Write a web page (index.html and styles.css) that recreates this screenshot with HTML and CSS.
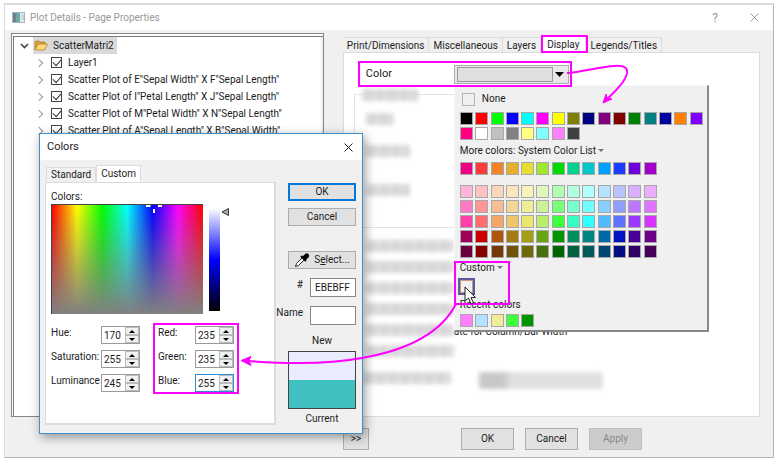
FILE: index.html
```html
<!DOCTYPE html>
<html lang="en">
<head>
<meta charset="utf-8">
<title>Plot Details - Page Properties</title>
<link rel="stylesheet" href="styles.css">
</head>
<body>
<main class="window">
  <header class="titlebar">
    <svg class="app-icon" width="13" height="11" viewBox="0 0 13 11"><rect x=".5" y=".5" width="12" height="10" fill="#e8ecef" stroke="#aab2b8"/><rect x="1" y="1" width="7" height="9" fill="#6fa8a2"/><rect x="1" y="1" width="3" height="9" fill="#6a8494"/><path d="M9 3h3M9 5h3M9 7h3" stroke="#a8c4cc"/></svg>
    <h1>Plot Details - Page Properties</h1>
    <button class="plain help" aria-label="Help">?</button>
    <button class="plain" aria-label="Close"><svg width="9" height="9" viewBox="0 0 9 9"><path d="M.5.5l8 8M8.500.5l-8 8" stroke="#999" fill="none"/></svg></button>
  </header>

  <div class="content">
    <ul class="tree">
      <li class="root"><svg width="9" height="6" viewBox="0 0 9 6"><path d="M1 1l3.500 3.500L8 1" fill="none" stroke="#444" stroke-width="1.600"/></svg><span class="node"><svg width="14" height="11" viewBox="0 0 14 11"><path d="M1 10V2l1-1h3l1 1h5v2" fill="#d9a43c" stroke="#a87a20" stroke-width=".7"/><path d="M1 10l3-6h9.500l-3 6z" fill="#fbd877" stroke="#a87a20" stroke-width=".7"/></svg>ScatterMatri2</span></li>
      <li><i class="chev"></i><input type="checkbox" id="t1" checked><label for="t1">Layer1</label></li>
      <li><i class="chev"></i><input type="checkbox" id="t2" checked><label for="t2">Scatter Plot of E"Sepal Width" X F"Sepal Length"</label></li>
      <li><i class="chev"></i><input type="checkbox" id="t3" checked><label for="t3">Scatter Plot of I"Petal Length" X J"Sepal Length"</label></li>
      <li><i class="chev"></i><input type="checkbox" id="t4" checked><label for="t4">Scatter Plot of M"Petal Width" X N"Sepal Length"</label></li>
      <li><i class="chev"></i><input type="checkbox" id="t5" checked><label for="t5">Scatter Plot of A"Sepal Length" X B"Sepal Width"</label></li>
    </ul>

    <section class="details">
      <nav class="tabs">
        <button>Print/Dimensions</button><button>Miscellaneous</button><button>Layers</button><button class="active">Display</button><button>Legends/Titles</button>
      </nav>
      <div class="page">
        <div class="color-row">
          <label for="color">Color</label>
          <div class="picker">
            <button id="color" class="color-button" aria-haspopup="true"><span class="fill"></span><svg width="9" height="5" viewBox="0 0 9 5"><path d="M0 0h9L4.500 5z"/></svg></button>
            <div class="popup">
              <label class="none"><input type="checkbox">None</label>
              <div class="swatches" id="basic"></div>
              <button class="heading">More colors: System Color List<i></i></button>
              <div class="swatches narrow" id="system"></div>
              <div class="swatches narrow shades" id="shades"></div>
              <button class="heading custom-heading">Custom<i></i></button>
              <button class="custom-swatch" aria-label="Custom color"></button>
              <div class="recent">Recent colors</div>
              <div class="swatches" id="recent"></div>
            </div>
          </div>
        </div>
        <div class="group first">
          <i class="smudge legend"></i>
          <i class="smudge s"></i><i class="smudge m"></i><i class="smudge m last"></i>
        </div>
        <div class="group second">
          <i class="smudge l"></i><i class="smudge l"></i><i class="smudge l"></i><i class="smudge l"></i>
          <div class="option"><i class="smudge l"></i><span>ate for Column/Bar Width</span></div>
          <i class="smudge l"></i>
        </div>
        <div class="bottom-row"><i class="smudge l"></i><i class="smudge combo"></i></div>
      </div>
    </section>
  </div>

  <footer class="actions">
    <button class="btn more">&gt;&gt;</button>
    <button class="btn">OK</button><button class="btn">Cancel</button><button class="btn" disabled>Apply</button>
  </footer>

  <section class="dialog" role="dialog" aria-labelledby="dlg-title">
    <header class="dialog-title">
      <h2 id="dlg-title">Colors</h2>
      <button class="plain" aria-label="Close"><svg width="9" height="9" viewBox="0 0 9 9"><path d="M.5.5l8 8M8.500.5l-8 8" stroke="#222" fill="none"/></svg></button>
    </header>
    <div class="dialog-body">
      <div class="dialog-main">
        <nav class="dialog-tabs"><button>Standard</button><button class="active">Custom</button></nav>
        <div class="dialog-page">
          <div class="caption">Colors:</div>
          <div class="spectrum-row">
            <div class="spectrum"><svg width="16" height="10" viewBox="0 0 16 10"><path d="M0 1h4.500M12 1h4M8 4v4" stroke="#fff" stroke-width="2"/></svg></div>
            <div class="lum"></div>
            <svg class="pointer" width="9" height="8" viewBox="0 0 9 8"><path d="M1 4l6.500-3.500v7z" fill="#aaa" stroke="#333"/></svg>
          </div>
          <div class="values">
            <label for="hue">Hue:</label><div class="spin"><input id="hue" value="170"><button aria-label="Up"></button><button class="down" aria-label="Down"></button></div>
            <label for="red">Red:</label><div class="spin"><input id="red" value="235"><button aria-label="Up"></button><button class="down" aria-label="Down"></button></div>
            <label for="sat">Saturation:</label><div class="spin"><input id="sat" value="255"><button aria-label="Up"></button><button class="down" aria-label="Down"></button></div>
            <label for="green">Green:</label><div class="spin"><input id="green" value="235"><button aria-label="Up"></button><button class="down" aria-label="Down"></button></div>
            <label for="lumi">Luminance</label><div class="spin"><input id="lumi" value="245"><button aria-label="Up"></button><button class="down" aria-label="Down"></button></div>
            <label for="blue">Blue:</label><div class="spin focus"><input id="blue" value="255"><button aria-label="Up"></button><button class="down" aria-label="Down"></button></div>
          </div>
        </div>
      </div>
      <div class="side">
        <button class="btn primary">OK</button>
        <button class="btn">Cancel</button>
        <button class="btn select"><svg width="16" height="16" viewBox="0 0 16 16"><path d="M1.500 14.500l1-3L9 5l2 2-6.500 6.500z" fill="#fff" stroke="#222"/><path d="M7 4l5 5M9 5.500L12 2.500a1.500 1.500 0 0 1 2 2L11 7.500z" fill="#000" stroke="#000" stroke-width="2"/></svg><span>S<u>e</u>lect...</span></button>
        <div class="field"><label for="hex">#</label><input id="hex" value="EBEBFF"></div>
        <div class="field"><label for="name">Name</label><input id="name"></div>
        <div class="state">New</div>
        <div class="compare"></div>
        <div class="state">Current</div>
      </div>
    </div>
  </section>

  <svg class="notes" width="778" height="461" viewBox="0 0 778 461">
    <g fill="none" stroke="#f0f" stroke-width="2">
      <rect x="359" y="62" width="212" height="24"/>
      <rect x="542" y="36" width="45" height="16"/>
      <rect x="455" y="262" width="54" height="42"/>
      <rect x="154" y="324" width="84" height="69"/>
      <path d="M567 73C590 71 624 60 627 70C629 78 617 90 606 100"/>
      <path d="M456 304C440 335 402 351 362 358C330 364 290 364 248 361"/>
    </g>
    <path d="M603 103l3-9 1 4 5 1z" fill="#f0f" stroke="#f0f"/>
    <path d="M241 360.500l10-4-2 4 2 5z" fill="#f0f" stroke="#f0f"/>
    <path d="M465 287v14l3.500-3 2.500 6 2.500-1-2.500-5.500h4.500z" fill="#fff" stroke="#222"/>
  </svg>
</main>
<script src="swatches.js"></script>
</body>
</html>
```
FILE: swatches.js
```js
const palettes = {
  basic: "#000 #f00 #0f0 #00f #0ff #f0f #ff0 #808000 #000080 #800080 #800000 #008000 #008080 #0000a0 #ff8000 #8000ff #ff0080 #fff #c0c0c0 #808080 #ffff80 #80ffff #ff80ff #404040",
  system: "#f00082 #fa3c3c #f08228 #e6af2d #e6dc32 #a0e632 #00dc00 #00d28c #00c8c8 #00a0ff #1e3cff #6e00dc #a000c8",
  shades: "#ffb4dc #ffc1c1 #fad7b9 #fae6c0 #f7f3bd #dff7bd #b0ffb0 #b0ffe0 #b0ffff #b5e3ff #bbc3ff #d8b0ff #edadff " +
    "#ff7ac3 #fd9797 #f8be91 #f3d798 #f1ec96 #cdf197 #78ff78 #78ffd0 #70ffff #85d0ff #919dff #bb78ff #df73ff " +
    "#ff40aa #ff6e6e #f5a567 #eec569 #eee66a #b9ee6a #3cff3c #35ffc0 #30ffff #50baff #6073ff #9d38ff #d935ff " +
    "#a0005a #cc0000 #b0560c #a57a12 #a59e12 #69a512 #009400 #008f5f #008585 #006aa8 #0014c4 #4a0095 #6c0087 " +
    "#6c003c #880000 #75380a #70520c #6e6a0c #46700e #006400 #006040 #005a5a #004873 #000e82 #310064 #470059",
  recent: "#ff80ff #b5e3ff #f1ec96 #3cff3c #009400"
};
for (const [id, colors] of Object.entries(palettes)) {
  const box = document.getElementById(id);
  for (const c of colors.split(" ")) {
    const b = document.createElement("button");
    b.style.background = c;
    b.setAttribute("aria-label", c);
    box.append(b);
  }
}
```
FILE: styles.css
```css
* { box-sizing: border-box; }
body { margin: 0; background: #fff; font: 10px/14px Roboto, "Open Sans", sans-serif; color: #1c1c1c; }
button, input { font: inherit; color: inherit; margin: 0; padding: 0; border-radius: 0; }
h1, h2 { margin: 0; font-size: inherit; font-weight: 400; }

.window { position: relative; display: flex; flex-direction: column; margin: 3px 4px; min-height: calc(100vh - 6px); border: 1px solid #b4b4b4; border-top: 2px solid #dcdcdc; border-left-color: #dcdcdc; background: #f0f0f0; }
.titlebar { display: flex; align-items: center; height: 25px; padding: 0 14px 0 7px; background: #fff; color: #999; }
.titlebar h1 { flex: 1; margin-left: 5px; }
.plain { border: 0; background: none; line-height: 0; }
.help { margin-right: 32px; font-size: 12px; line-height: 14px; }

.content { flex: 1; display: grid; grid-template-columns: 3fr 4fr; gap: 19px; padding: 3px 13px 0 6px; }
.tree { margin: 0; padding: 3px 0 0 4px; list-style: none; background: #fff; border: 1px solid #828790; box-shadow: inset 1px 2px 0 #fff, inset 2px 3px 0 #777, inset -2px 0 0 #f0f0f0; overflow: hidden; white-space: nowrap; }
.tree li { display: flex; align-items: center; height: 17px; padding-left: 20px; }
.tree .root { padding-left: 4px; }
.node { display: flex; align-items: center; gap: 5px; margin-left: 4px; padding: 0 3px 0 1px; height: 17px; background: #d9d9d9; }
.chev { width: 6px; height: 6px; margin-right: 9px; border: solid #999; border-width: 1px 1px 0 0; transform: rotate(45deg); }
.tree input { appearance: none; width: 11px; height: 11px; margin-right: 6px; border: 1px solid #444; background: #fff; position: relative; }
.tree input::after { content: ""; position: absolute; left: 1px; top: 1px; width: 7px; height: 4px; border: solid #333; border-width: 0 0 1px 1px; transform: rotate(-48deg); }

.details { display: flex; flex-direction: column; min-width: 0; }
.tabs { display: flex; align-items: flex-end; height: 19px; margin-right: 100px; }
.tabs button { height: 15px; padding: 0 4px; border: 1px solid #dcdcdc; border-width: 1px 1px 0 0; background: #f0f0f0; line-height: 13px; white-space: nowrap; }
.tabs .active { height: 17px; padding: 0 6px; background: #fff; }
.page { flex: 1; background: #fff; border: 1px solid #dcdcdc; padding: 10px; }
.color-row { display: flex; align-items: center; height: 22px; margin-bottom: 9px; padding-left: 12px; }
.color-row > label { width: 88px; font-size: 11px; }
.picker { position: relative; }
.color-button { display: flex; align-items: center; gap: 2px; width: 115px; height: 19px; padding: 1px 4px 1px 2px; border: 1px solid #adadad; background: #e8e8e8; }
.fill { flex: 1; height: 15px; border: 1px solid #999; background: #dfdfdf; }
.popup { position: absolute; z-index: 2; left: 0; top: 20px; padding: 6px 4px 3px 5px; border: 1px solid #f8f8f8; border-right: 2px solid #888; border-bottom: 2px solid #888; background: #f0f0f0; }
.none { display: flex; align-items: center; gap: 7px; height: 15px; margin: 0 0 5px 2px; }
.none input { appearance: none; width: 13px; height: 13px; margin: 0; border: 1px solid #b4b4b4; }
.swatches { display: grid; grid-template-columns: repeat(16, 13px); justify-content: space-between; row-gap: 2px; width: 243px; }
.narrow { grid-template-columns: repeat(13, 13px); width: 197px; }
.swatches button { height: 13px; border: 1px solid #a8a8a8; }
.heading { display: flex; align-items: center; gap: 2px; height: 22px; border: 0; background: none; }
.heading i { border: 3px solid transparent; border-top-color: #777; border-bottom: 0; }
.shades { margin-top: 10px; }
.custom-heading { height: 20px; }
.custom-swatch { display: block; width: 17px; height: 17px; margin-left: -2px; border: 2px solid #5a5a9c; background: #f0f0f0; box-shadow: inset 0 0 0 1px #c49a80; }
.recent { height: 19px; padding-top: 3px; }

.group { margin-right: 60px; border: 1px solid #e4e4e4; }
.first { height: 134px; padding-left: 11px; }
.second { height: 136px; padding: 11px 0 0 11px; border-color: #fff; }
.smudge { display: block; height: 12px; border-radius: 2px; background: repeating-linear-gradient(90deg, #dcdadc 0 4px, #d6d4d6 4px 9px, #e0dee0 9px 12px); filter: blur(2px); }
.legend { width: 56px; margin: -6px 0 12px -4px; }
.s { width: 28px; margin-bottom: 20px; }
.m { width: 44px; margin-bottom: 27px; }
.last { margin: 0; }
.l { width: 88px; margin-bottom: 9px; }
.option { display: flex; align-items: flex-start; height: 21px; }
.option span { line-height: 16px; }
.bottom-row { display: flex; gap: 28px; margin: 8px 0 0 9px; }
.combo { width: 124px; height: 17px; background: linear-gradient(90deg, #c8c8c8 0 24px, #e0e0e0 32px); }

.actions { display: flex; align-items: center; gap: 11px; height: 40px; padding: 3px 131px 0 338px; }
.btn { height: 22px; width: 53px; border: 1px solid #adadad; background: #e1e1e1; }
.more { width: 26px; margin-right: auto; }
.btn:disabled { background: #ccc; color: #8a8a8a; border-color: #bfbfbf; }

.dialog { position: absolute; z-index: 3; left: 34px; top: 128px; width: 324px; border: 1px solid #3e91cc; background: #f0f0f0; box-shadow: 2px 3px 10px rgba(0,0,0,.4); }
.dialog-title { display: flex; align-items: center; justify-content: space-between; height: 26px; padding: 0 9px 0 7px; background: #fff; font-size: 11px; }
.dialog-body { display: flex; gap: 12px; padding: 5px 6px 7px 5px; }
.dialog-main { flex: 1; }
.dialog-tabs { display: flex; align-items: flex-end; height: 17px; padding-left: 1px; }
.dialog-tabs button { height: 15px; padding: 0 4px; border: 1px solid #dcdcdc; border-bottom: 0; background: #f0f0f0; }
.dialog-tabs .active { height: 17px; background: #fff; border-color: #dcdcdc; }
.dialog-page { height: 243px; padding: 7px 5px; border: 1px solid #dcdcdc; border-width: 1px 2px 2px 1px; background: #fff; }
.spectrum-row { display: flex; gap: 6px; }
.spectrum { width: 152px; height: 110px; padding-left: 94px; line-height: 0; border: solid #444; border-width: 1px 0 0 1px; background: linear-gradient(rgba(128,128,128,0), #808080), linear-gradient(90deg, red, #ff0, lime, cyan, blue, magenta, red); }
.lum { width: 11px; height: 103px; margin-top: 4px; background: linear-gradient(#fff, #00f 50%, #000); }
.pointer { margin: 4px 0 0 -5px; }
.values { display: grid; grid-template-columns: 50px 57px 37px 39px; grid-auto-rows: 18px; row-gap: 6px; margin-top: 12px; }
.spin { display: grid; grid-template: 8px 8px / 23px 14px; width: 39px; height: 18px; border: 1px solid #999; background: #fff; }
.spin input { grid-row: 1 / 3; width: 23px; height: 16px; border: 0; padding-left: 2px; background: none; }
.spin button { width: 14px; height: 8px; border: 1px solid #bbb; background: #f0f0f0; display: grid; place-items: center; }
.spin button::before { content: ""; border: 3px solid transparent; border-top: 0; border-bottom-color: #000; }
.spin .down::before { border-top: 3px solid #000; border-bottom: 0; }
.focus { border-color: #2b8cdd; }
.side { display: flex; flex-direction: column; width: 68px; padding-top: 18px; }
.side .btn { width: 68px; height: 18px; margin-bottom: 7px; line-height: 14px; }
.side .primary { border: 2px solid #0078d7; }
.side .select { display: flex; align-items: center; justify-content: center; gap: 4px; margin: 18px 0 9px; }
.field { display: flex; justify-content: flex-end; gap: 7px; height: 19px; margin-bottom: 9px; }
.field input { flex: none; width: 46px; border: 1px solid #888; background: #fff; padding-left: 4px; }
.state { text-align: center; }
.compare { height: 58px; margin: 3px 0; border: 1px solid #444; background: linear-gradient(#ebebff 50%, #40c0c0 50%); }
.notes { position: absolute; z-index: 4; left: -5px; top: -5px; pointer-events: none; }
```
